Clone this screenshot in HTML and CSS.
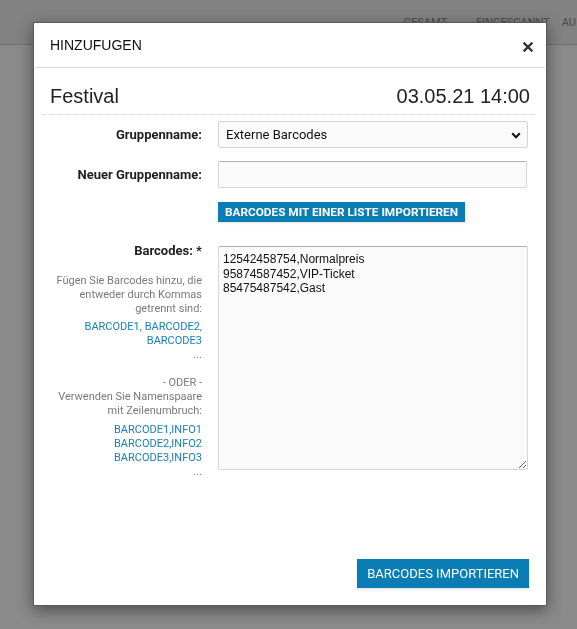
FILE: index.html
```html
<!DOCTYPE html>
<html lang="de">
<head>
    <meta charset="UTF-8">
    <meta name="viewport" content="width=device-width, initial-scale=1.0">
    <title>Barcodes hinzufügen</title>
    <link rel="stylesheet" href="styles.css">
</head>
<body>
    <div class="seite">
        <div class="kopfzeile">
            <div class="spalten">
                <span>GESAMT</span>
                <span>EINGESCANNT</span>
                <span class="letzte">AU</span>
            </div>
        </div>
    </div>

    <div class="overlay"></div>

    <div class="modal">
        <div class="modal-kopf">
            <span class="modal-titel">HINZUFUGEN</span>
            <button class="schliessen" title="Schließen">
                <svg width="10" height="10" viewBox="0 0 10 10">
                    <path d="M1.5 1.5 L8.5 8.5 M8.5 1.5 L1.5 8.5" stroke="#333" stroke-width="2.4" stroke-linecap="square"/>
                </svg>
            </button>
        </div>

        <div class="modal-inhalt">
            <div class="veranstaltung">
                <span>Festival</span>
                <span>03.05.21 14:00</span>
            </div>

            <div class="formular">
                <label class="beschriftung">Gruppenname:</label>
                <div class="auswahl">
                    <select>
                        <option>Externe Barcodes</option>
                    </select>
                    <svg class="pfeil" width="10" height="7" viewBox="0 0 10 7">
                        <path d="M1.2 1.3 L5 5.2 L8.8 1.3" fill="none" stroke="#111" stroke-width="2"/>
                    </svg>
                </div>

                <label class="beschriftung">Neuer Gruppenname:</label>
                <input type="text" class="eingabe">

                <span></span>
                <div><button class="knopf-klein">BARCODES MIT EINER LISTE IMPORTIEREN</button></div>

                <div class="barcode-spalte">
                    <label class="beschriftung">Barcodes: *</label>
                    <div class="hilfe">
                        <p>Fügen Sie Barcodes hinzu, die entweder durch Kommas getrennt sind:</p>
                        <p class="beispiel">BARCODE1, BARCODE2, BARCODE3</p>
                        <p>...</p>
                        <p class="leer">&nbsp;</p>
                        <p>- ODER -<br>Verwenden Sie Namenspaare mit Zeilenumbruch:</p>
                        <p class="beispiel abstand">BARCODE1,INFO1<br>BARCODE2,INFO2<br>BARCODE3,INFO3</p>
                        <p>...</p>
                    </div>
                </div>
                <textarea class="barcodes">12542458754,Normalpreis
95874587452,VIP-Ticket
85475487542,Gast</textarea>
            </div>
        </div>

        <div class="modal-fuss">
            <button class="knopf">BARCODES IMPORTIEREN</button>
        </div>
    </div>
</body>
</html>
```

FILE: styles.css
```css
body {
    margin: 0;
    padding: 0;
    background-color: #ffffff;
    font-family: Roboto, "Liberation Sans", sans-serif;
    height: 100vh;
    overflow: hidden;
}

/* Seite hinter dem Dialog */
.seite {
    height: 100%;
}

.kopfzeile {
    height: 44px;
    border-bottom: 1px solid #d0d0d0;
    background-color: #f0f0f0;
    display: flex;
    justify-content: flex-end;
}

.spalten {
    display: flex;
    gap: 29px;
    padding-top: 16px;
    padding-right: 1px;
    font-size: 11px;
    color: #8a8a8a;
}

.spalten .letzte {
    margin-left: -17px;
}

.overlay {
    position: fixed;
    top: 0;
    left: 0;
    width: 100%;
    height: 100%;
    background-color: rgba(0, 0, 0, 0.46);
}

/* Dialog */
.modal {
    position: absolute;
    top: 22px;
    left: 33px;
    width: 512px;
    height: 582px;
    background-color: #ffffff;
    border: 1px solid #5a5a5a;
    box-shadow: 0 4px 14px rgba(0, 0, 0, 0.45);
    display: flex;
    flex-direction: column;
}

.modal-kopf {
    height: 44px;
    margin: 0 1px;
    border-bottom: 1px solid #dcdcdc;
    display: flex;
    align-items: center;
    justify-content: space-between;
    padding: 0 12px 0 15px;
}

.modal-titel {
    font-family: "Liberation Sans", Arial, sans-serif;
    font-size: 14px;
    color: #111;
}

.schliessen {
    background: none;
    border: none;
    padding: 0;
    margin-top: 3px;
    cursor: pointer;
    display: flex;
}

.modal-inhalt {
    padding: 0 11px 0 8px;
    flex: 1;
}

.veranstaltung {
    display: flex;
    align-items: center;
    justify-content: space-between;
    padding: 11px 5px 0 8px;
    border-bottom: 1px dotted #d8d8d8;
    font-family: "Liberation Sans", Arial, sans-serif;
    font-size: 20px;
    color: #222;
    box-sizing: border-box;
    height: 47px;
}

.formular {
    display: grid;
    grid-template-columns: 160px 310px;
    column-gap: 16px;
    row-gap: 13px;
    margin-top: 6px;
    align-items: center;
}

.beschriftung {
    text-align: right;
    font-weight: bold;
    font-size: 13px;
    color: #222;
}

.auswahl {
    position: relative;
}

.auswahl select {
    appearance: none;
    -webkit-appearance: none;
    width: 100%;
    height: 27px;
    border: 1px solid #d4d4d4;
    border-radius: 2px;
    background-color: #fafafa;
    font-family: Roboto, sans-serif;
    font-size: 13px;
    color: #111;
    padding: 0 7px;
    margin: 0;
}

.pfeil {
    position: absolute;
    right: 7px;
    top: 11px;
    pointer-events: none;
}

.eingabe {
    height: 27px;
    box-sizing: border-box;
    width: 309px;
    border: 1px solid #d6d6d6;
    border-top-color: #b0b0b0;
    border-radius: 2px;
    background-color: #fafafa;
    margin: 0;
}

.knopf-klein {
    background-color: #0a7db4;
    color: #ffffff;
    border: none;
    font-family: Roboto, sans-serif;
    font-weight: bold;
    font-size: 11.8px;
    height: 20px;
    padding: 0 7px;
    cursor: pointer;
    box-shadow: 0 1px 2px rgba(0, 0, 0, 0.12);
}

.barcode-spalte {
    align-self: start;
    margin-top: 8px;
    display: flex;
    flex-direction: column;
    text-align: right;
}

.barcode-spalte .beschriftung {
    line-height: 15px;
}

.hilfe {
    margin-top: 16px;
    font-size: 11px;
    line-height: 14px;
    color: #7a7a7a;
    padding-left: 12px;
}

.hilfe p {
    margin: 0;
}

.hilfe .beispiel {
    color: #1a80b8;
    margin-top: 4px;
    padding-left: 30px;
}

.hilfe .abstand {
    margin-top: 5px;
}

.barcodes {
    align-self: start;
    margin: 11px 0 0 0;
    width: 310px;
    height: 224px;
    box-sizing: border-box;
    border: 1px solid #d6d6d6;
    border-top-color: #b0b0b0;
    border-radius: 2px;
    background-color: #fafafa;
    font-family: "Liberation Sans", Arial, sans-serif;
    font-size: 12px;
    line-height: 14.5px;
    color: #111;
    padding: 5px 4px;
}

.modal-fuss {
    display: flex;
    justify-content: flex-end;
    padding: 0 17px 17px 0;
}

.knopf {
    background-color: #0a7db4;
    color: #ffffff;
    border: none;
    font-family: Roboto, sans-serif;
    font-size: 13px;
    height: 29px;
    padding: 0 10px;
    cursor: pointer;
    box-shadow: 0 1px 3px rgba(0, 0, 0, 0.15);
}
```
